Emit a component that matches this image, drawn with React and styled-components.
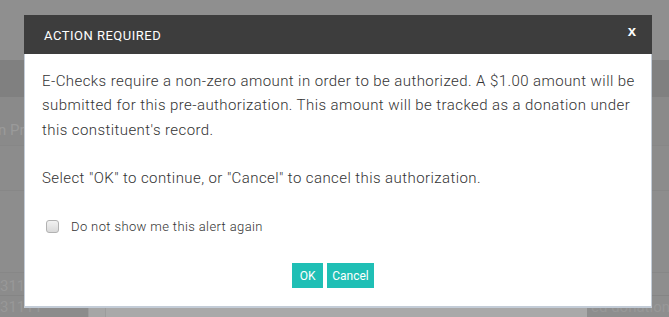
import React from 'react'
import styled, { createGlobalStyle } from 'styled-components'

const GlobalStyle = createGlobalStyle`
  html, body {
    margin: 0;
    padding: 0;
  }
  body {
    font-family: Roboto, "Liberation Sans", Arial, sans-serif;
    background: #8e8e8e;
  }
`;

// page behind the dimmed overlay
const Page = styled.div`
  position: relative;
  width: 669px;
  height: 317px;
  overflow: hidden;
  background: #8e8e8e;
  display: flex;
  flex-direction: column;
`;

const Band = styled.div`
  height: ${p => p.h}px;
  background: ${p => p.bg};
  border-bottom: ${p => (p.line ? '1px solid #878787' : 'none')};
  display: flex;
  align-items: center;
  color: #9a9a9a;
  font-size: 15px;
  overflow: hidden;
  white-space: nowrap;
`;

const GhostText = styled.span`
  margin-left: ${p => p.left || 0}px;
  margin-top: ${p => p.top || 0}px;
`;

const BottomRow = styled.div`
  flex: 1;
  display: grid;
  grid-template-columns: 88px 17px 1fr 82px;
`;

const Column = styled.div`
  background: ${p => p.bg};
  border-left: ${p => (p.line ? '1px solid #9c9c9c' : 'none')};
  display: flex;
  flex-direction: column;
  color: #989898;
  font-size: 15px;
  overflow: hidden;
  white-space: nowrap;
`;

const Cell = styled.div`
  height: ${p => p.h}px;
  border-bottom: ${p => (p.line ? '1px solid #858585' : 'none')};
  display: flex;
  align-items: flex-end;
  padding-left: ${p => p.pad || 0}px;
`;

// modal
const Dialog = styled.div`
  position: absolute;
  left: 24px;
  top: 15px;
  width: 628px;
  display: flex;
  flex-direction: column;
`;

const Header = styled.div`
  height: 39px;
  background: #3d3d3d;
  color: #fff;
  display: flex;
  align-items: center;
  justify-content: space-between;
  padding: 0 16px 2px 20px;
  box-sizing: border-box;
`;

const Title = styled.div`
  font-size: 13px;
  text-transform: uppercase;
  letter-spacing: 0.5px;
  padding-top: 3px;
`;

const Close = styled.button`
  border: none;
  background: none;
  color: #fff;
  font-family: "Liberation Sans", Arial, sans-serif;
  font-weight: bold;
  font-size: 15px;
  padding: 0;
  cursor: pointer;
  margin-top: -6px;
`;

const Body = styled.div`
  background: #fff;
  border: 1px solid #c3ccd7;
  border-top: none;
  border-bottom: 2px solid #c3ccd7;
  padding: 15px 10px 18px 17px;
  color: #333;
`;

const Message = styled.p`
  margin: 0;
  font-size: 15px;
  line-height: 24.3px;
  font-weight: 300;
  letter-spacing: 0.42px;
`;

const CheckRow = styled.label`
  display: flex;
  align-items: center;
  margin: 24px 0 0 4px;
  font-size: 13px;
  font-weight: 300;
  letter-spacing: 0.38px;
  color: #333;
  height: 24px;
`;

const Check = styled.span`
  width: 11px;
  height: 11px;
  border: 1px solid #b2b2b2;
  border-radius: 3px;
  background: linear-gradient(#f2f2f2, #d9d9d9);
  margin-right: 12px;
  flex-shrink: 0;
`;

const Footer = styled.div`
  display: flex;
  justify-content: center;
  gap: 4px;
  margin-top: 25px;
  padding-right: 17px;
`;

const Button = styled.button`
  height: 25px;
  min-width: ${p => p.minWidth || 0}px;
  border: none;
  background: #1fbfb5;
  color: #fff;
  font-family: Roboto, "Liberation Sans", Arial, sans-serif;
  font-size: 12px;
  padding: 0 5px;
  cursor: pointer;
`;

function App() {
  return (
    <>
      <GlobalStyle />
      <Page>
        <Band h={60} bg="#8f8f8f" />
        <Band h={37} bg="#808080" />
        <Band h={48} bg="#8a8a8a" line>
          <GhostText left={-2} top={18}>n Pro</GhostText>
        </Band>
        <Band h={44} bg="#8c8c8c" line />
        <Band h={81} bg="#8d8d8d" line />
        <BottomRow>
          <Column bg="#8c8c8c">
            <Cell h={22} line pad={0}>31111</Cell>
            <Cell h={20} pad={0}>31111</Cell>
          </Column>
          <Column bg="#a6a6a6" line />
          <Column bg="#a9a9a9" line />
          <Column bg="#8e8e8e">
            <Cell h={22} line />
            <Cell h={20} pad={4}>ed donation</Cell>
          </Column>
        </BottomRow>

        <Dialog>
          <Header>
            <Title>Action Required</Title>
            <Close>x</Close>
          </Header>
          <Body>
            <Message>
              E-Checks require a non-zero amount in order to be authorized. A $1.00 amount will be
              submitted for this pre-authorization. This amount will be tracked as a donation under
              this constituent's record.
              <br />
              <br />
              Select "OK" to continue, or "Cancel" to cancel this authorization.
            </Message>
            <CheckRow>
              <Check />
              Do not show me this alert again
            </CheckRow>
            <Footer>
              <Button minWidth={31}>OK</Button>
              <Button>Cancel</Button>
            </Footer>
          </Body>
        </Dialog>
      </Page>
    </>
  )
}

export default App
